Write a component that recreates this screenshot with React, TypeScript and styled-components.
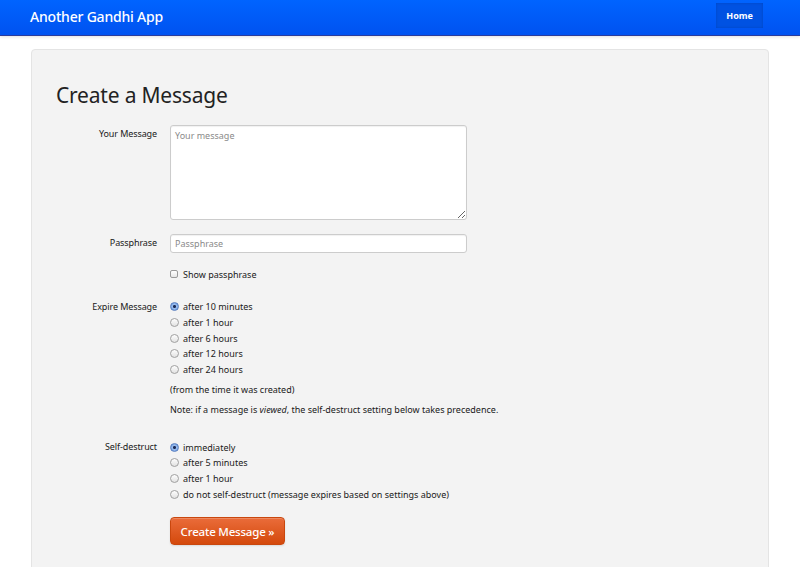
import React from "react";
import styled, { createGlobalStyle } from "styled-components";

const Global = createGlobalStyle`
  html, body { margin: 0; padding: 0; background: #fff; }
  body { font-family: "Noto Sans", "Open Sans", "DejaVu Sans", sans-serif; color: #333; }
  * { box-sizing: border-box; }
`;

const Navbar = styled.header`
  height: 36px;
  background: linear-gradient(#0064ff, #0052f0);
  border-bottom: 1px solid #2b3c9c;
  box-shadow: 0 1px 3px rgba(0,0,0,0.12);
  display: flex;
  align-items: center;
  justify-content: space-between;
  padding: 0 37px 0 30px;
`;

const Brand = styled.a`
  color: #fff;
  font-size: 14px;
  font-weight: 500;
  letter-spacing: -0.2px;
  text-decoration: none;
  margin-top: -3px;
`;

const NavItem = styled.a<{ $active?: boolean }>`
  color: #fff;
  font-size: 9px;
  font-weight: 700;
  text-decoration: none;
  padding: 0 10px;
  height: 25px;
  margin-top: -5px;
  display: flex;
  align-items: center;
  background: ${(p) => (p.$active ? "#0052e2" : "transparent")};
  box-shadow: ${(p) => (p.$active ? "inset 0 0 3px rgba(0,0,0,0.15)" : "none")};
`;

const Container = styled.main`
  padding: 13px 31px 0;
`;

const Well = styled.section`
  background: #f3f3f3;
  border: 1px solid #e4e4e4;
  border-radius: 4px;
  padding: 30px 24px 40px;
  min-height: 530px;
`;

const Title = styled.h1`
  margin: 0 0 15px;
  font-size: 21px;
  font-weight: 400;
  color: #222;
  line-height: 30px;
  letter-spacing: -0.2px;
`;

const Row = styled.div<{ $mb?: number }>`
  display: grid;
  grid-template-columns: 101px 1fr;
  column-gap: 13px;
  margin-bottom: ${(p) => p.$mb ?? 0}px;
`;

const Label = styled.label<{ $pt?: number }>`
  font-size: 9px;
  color: #1a1a1a;
  text-align: right;
  padding-top: ${(p) => p.$pt ?? 0}px;
  line-height: 12px;
  letter-spacing: -0.1px;
`;

const Controls = styled.div`
  display: flex;
  flex-direction: column;
  align-items: flex-start;
`;

const TextArea = styled.textarea`
  width: 297px;
  height: 95px;
  border: 1px solid #ccc;
  border-radius: 3px;
  background: #fff;
  font-family: inherit;
  font-size: 9px;
  padding: 3px 4px;
  resize: vertical;
  box-shadow: inset 0 1px 1px rgba(0,0,0,0.06);
  &::placeholder { color: #8a8a8a; }
`;

const Input = styled.input`
  width: 297px;
  height: 19px;
  border: 1px solid #ccc;
  border-radius: 3px;
  background: #fff;
  font-family: inherit;
  font-size: 9px;
  padding: 0 4px;
  box-shadow: inset 0 1px 1px rgba(0,0,0,0.06);
  &::placeholder { color: #8a8a8a; }
`;

const Option = styled.div<{ $h?: number }>`
  display: flex;
  align-items: center;
  gap: 4px;
  height: ${(p) => p.$h ?? 15.7}px;
  font-size: 9px;
  color: #1a1a1a;
`;

const Check = styled.span`
  width: 8px;
  height: 8px;
  border: 1px solid #9a9a9a;
  border-radius: 2px;
  background: linear-gradient(#fff, #e6e6e6);
  flex: none;
  margin-right: 1px;
`;

const Radio = styled.span<{ $on?: boolean }>`
  width: 9px;
  height: 9px;
  border-radius: 50%;
  flex: none;
  border: 1px solid ${(p) => (p.$on ? "#5a7fc0" : "#a0a0a0")};
  background: ${(p) =>
    p.$on
      ? "radial-gradient(circle, #1a2a55 0 1.2px, #9ec0f0 1.8px, #5f92dc 100%)"
      : "linear-gradient(#fdfdfd, #e2e2e2)"};
`;

const Note = styled.p<{ $mt?: number }>`
  margin: ${(p) => p.$mt ?? 0}px 0 0;
  font-size: 9px;
  color: #1a1a1a;
  line-height: 12px;
`;

const Button = styled.button`
  margin-top: 15px;
  width: 115px;
  height: 28px;
  border: 1px solid #c9470e;
  border-radius: 4px;
  background: linear-gradient(#ea6c3a, #d4490c);
  color: #fff;
  font-family: inherit;
  font-size: 11.5px;
  font-weight: 500;
  letter-spacing: -0.2px;
  box-shadow: inset 0 1px 0 rgba(255,255,255,0.2), 0 1px 2px rgba(0,0,0,0.1);
`;

const expire = ["after 10 minutes", "after 1 hour", "after 6 hours", "after 12 hours", "after 24 hours"];
const destruct = [
  "immediately",
  "after 5 minutes",
  "after 1 hour",
  "do not self-destruct (message expires based on settings above)",
];

export default function App() {
  return (
    <>
      <Global />
      <Navbar>
        <Brand href="#">Another Gandhi App</Brand>
        <NavItem href="#" $active>Home</NavItem>
      </Navbar>
      <Container>
        <Well>
          <Title>Create a Message</Title>
          <Row $mb={14}>
            <Label $pt={3}>Your Message</Label>
            <Controls>
              <TextArea placeholder="Your message" />
            </Controls>
          </Row>
          <Row $mb={15}>
            <Label $pt={3}>Passphrase</Label>
            <Controls>
              <Input placeholder="Passphrase" />
            </Controls>
          </Row>
          <Row $mb={19}>
            <span />
            <Controls>
              <Option $h={12}>
                <Check />
                Show passphrase
              </Option>
            </Controls>
          </Row>
          <Row $mb={23}>
            <Label $pt={2}>Expire Message</Label>
            <Controls>
              {expire.map((t, i) => (
                <Option key={t}>
                  <Radio $on={i === 0} />
                  {t}
                </Option>
              ))}
              <Note $mt={7}>(from the time it was created)</Note>
              <Note $mt={8}>
                Note: if a message is <i>viewed</i>, the self-destruct setting below takes precedence.
              </Note>
            </Controls>
          </Row>
          <Row>
            <Label $pt={2}>Self-destruct</Label>
            <Controls>
              {destruct.map((t, i) => (
                <Option key={t}>
                  <Radio $on={i === 0} />
                  {t}
                </Option>
              ))}
              <Button>Create Message »</Button>
            </Controls>
          </Row>
        </Well>
      </Container>
    </>
  );
}
